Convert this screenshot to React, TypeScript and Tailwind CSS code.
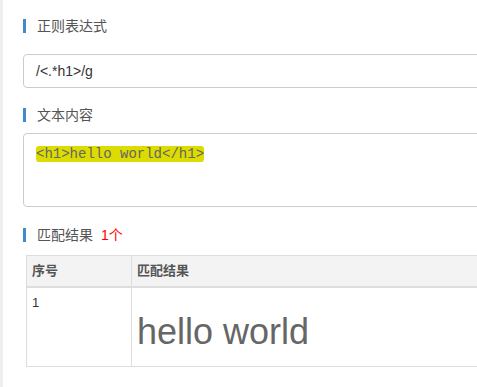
const Heading = ({ children }: { children: React.ReactNode }) => (
  <div className="flex items-center h-[14px] border-l-[3px] border-[#428bca] pl-[11px] text-[14px] leading-[14px] text-[#555]">
    {children}
  </div>
);

export default function App() {
  return (
    <div
      className="flex h-[387px] w-[477px] overflow-hidden bg-white"
      style={{ fontFamily: '"Liberation Sans", "Noto Sans CJK SC", sans-serif' }}
    >
      <div className="w-[3px] shrink-0 bg-[#eeeeee]" />
      <div className="w-[640px] shrink-0 pl-[20px] pt-[19px]">
        <Heading>正则表达式</Heading>
        <div className="mt-[21px] flex h-[34px] items-center rounded-[4px] border border-[#cccccc] px-[12px] text-[14px] text-[#333]">
          /&lt;.*h1&gt;/g
        </div>

        <div className="mt-[20px]">
          <Heading>文本内容</Heading>
        </div>
        <div className="mt-[11px] flex h-[74px] items-start rounded-[4px] border border-[#cccccc] px-[12px] pt-[12px]">
          <span
            className="block h-[16px] rounded-[3px] bg-[#dcdc00] text-[14px] leading-[16px] text-[#666]"
            style={{ fontFamily: '"Liberation Mono", monospace' }}
          >
            &lt;h1&gt;hello world&lt;/h1&gt;
          </span>
        </div>

        <div className="mt-[21px]">
          <Heading>
            匹配结果<span className="ml-[8px] text-[#ff0000]">1个</span>
          </Heading>
        </div>

        <table className="ml-[3px] mt-[13px] w-[600px] border-collapse text-[13px] text-[#555]">
          <thead>
            <tr className="bg-[#f3f3f3]">
              <th className="h-[31px] w-[105px] border border-b-2 border-[#dddddd] px-[5px] text-left font-bold">序号</th>
              <th className="h-[31px] border border-b-2 border-[#dddddd] px-[5px] text-left font-bold">匹配结果</th>
            </tr>
          </thead>
          <tbody>
            <tr>
              <td className="border border-[#dddddd] p-[5px] align-top text-[#333]">1</td>
              <td className="border border-[#dddddd] p-[5px] align-top">
                <h1 className="mb-[10px] mt-[20px] text-[36px] leading-[38px] text-[#666]">hello world</h1>
              </td>
            </tr>
          </tbody>
        </table>
      </div>
    </div>
  );
}
